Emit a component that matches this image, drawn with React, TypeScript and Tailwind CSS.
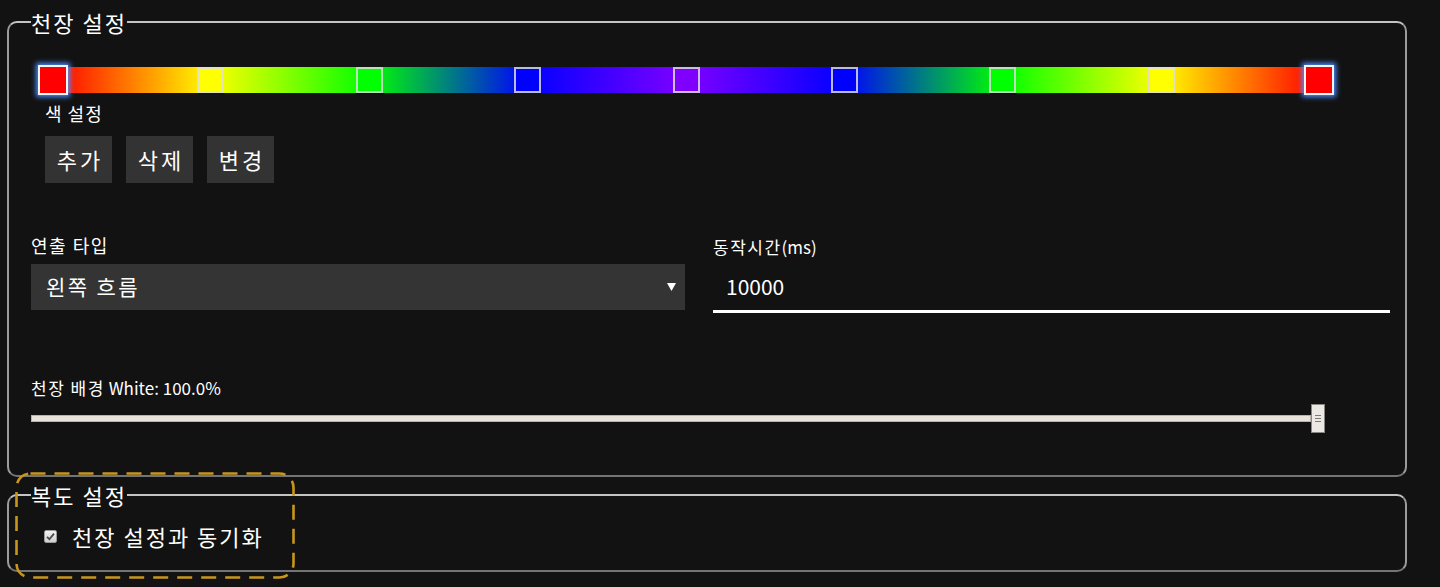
import React from "react";

const stops = [
  { bg: "bg-[#ff0000]", end: true },
  { bg: "bg-[#ffff00]", end: false },
  { bg: "bg-[#00ff00]", end: false },
  { bg: "bg-[#0000ff]", end: false },
  { bg: "bg-[#8000ff]", end: false },
  { bg: "bg-[#0000ff]", end: false },
  { bg: "bg-[#00ff00]", end: false },
  { bg: "bg-[#ffff00]", end: false },
  { bg: "bg-[#ff0000]", end: true },
];

const font = "font-['Noto_Sans_CJK_KR','Noto_Sans',sans-serif]";

function Legend({ children }: { children: React.ReactNode }) {
  return (
    <legend className="text-[22px] leading-[28px] tracking-[2px] text-white">{children}</legend>
  );
}

export default function App() {
  return (
    <div className={`relative h-[587px] overflow-hidden bg-[#121212] pt-[8px] text-white ${font}`}>
      {/* 천장 설정 */}
      <fieldset className="ml-[7px] w-[1400px] rounded-[10px] border-2 border-t-[#c4c4c4] border-x-[#9c9c9c] border-b-[#747474] pl-[22px] pr-[14px] pb-[42px]">
        <Legend>천장 설정</Legend>

        {/* gradient bar */}
        <div className="ml-[9px] mt-[31px] flex h-[26px] w-[1292px] items-center justify-between bg-[linear-gradient(to_right,#ff0000_1%,#ffff00_13.25%,#00ff00_25.5%,#0000ff_37.75%,#8000ff_50%,#0000ff_62.25%,#00ff00_74.5%,#ffff00_86.75%,#ff0000_99%)]">
          {stops.map((s, i) =>
            s.end ? (
              <div
                key={i}
                className={`-mx-[2px] h-[30px] w-[30px] border-2 border-[#eef8ff] shadow-[0_0_5px_2px_#4d8dff] ${s.bg}`}
              />
            ) : (
              <div
                key={i}
                className={`h-[26px] w-[27px] border-2 border-[#dcdcdc]/85 ${s.bg}`}
              />
            )
          )}
        </div>

        <div className="ml-[14px] mt-[8px] text-[18px] leading-[24px] tracking-[1px]">색 설정</div>
        <div className="ml-[14px] mt-[11px] flex gap-[14px]">
          {["추가", "삭제", "변경"].map((t) => (
            <button
              key={t}
              className="flex h-[47px] w-[67px] items-center justify-center bg-[#333333] pl-[3px] text-[22px] tracking-[3px] text-white"
            >
              {t}
            </button>
          ))}
        </div>

        <div className="mt-[50px] grid grid-cols-[654px_677px] gap-[28px]">
          <div>
            <div className="text-[18px] leading-[24px] tracking-[1.5px]">연출 타입</div>
            <div className="mt-[7px] flex h-[46px] items-center justify-between bg-[#343434] pl-[15px] pr-[9px]">
              <span className="text-[21px] tracking-[2.4px]">왼쪽 흐름</span>
              <svg width="9" height="10" viewBox="0 0 9 10">
                <path d="M0 1 L9 1 L4.5 9 Z" fill="#ffffff" />
              </svg>
            </div>
          </div>
          <div>
            <div className="mt-[2px] text-[17px] leading-[24px]">
              <span className="tracking-[1.5px]">동작시간</span>(ms)
            </div>
            <div className="mt-[5px] flex h-[49px] items-center border-b-[3px] border-white pl-[13px] text-[21px]">
              10000
            </div>
          </div>
        </div>

        <div className="mt-[63px] text-[17px] leading-[24px]">
          <span className="tracking-[1.5px]">천장 배경</span> White: 100.0%
        </div>
        <div className="mt-[4px] flex h-[29px] w-[1294px] items-center">
          <div className="h-[7px] flex-1 border border-[#b8b4ac] bg-[#e8e4dc]" />
          <div className="flex h-[29px] w-[14px] flex-col items-center justify-center gap-[2px] border border-[#8a8782] bg-[#ece9e4]">
            <span className="h-[1px] w-[6px] bg-[#7d7a76]" />
            <span className="h-[1px] w-[6px] bg-[#7d7a76]" />
            <span className="h-[1px] w-[6px] bg-[#7d7a76]" />
          </div>
        </div>
      </fieldset>

      {/* 복도 설정 */}
      <fieldset className="ml-[7px] mt-[4px] w-[1400px] rounded-[10px] border-2 border-t-[#c4c4c4] border-x-[#9c9c9c] border-b-[#747474] pl-[22px] pb-[19px]">
        <Legend>복도 설정</Legend>
        <div className="ml-[13px] mt-[12px] flex h-[30px] items-center gap-[15px]">
          <span className="flex h-[13px] w-[13px] items-center justify-center rounded-[2px] border border-[#9a9a9a] bg-[linear-gradient(#f2f2f2,#cfcfcf)]">
            <svg width="9" height="9" viewBox="0 0 9 9">
              <path d="M1 4.8 L3.4 7.2 L8 1.6" fill="none" stroke="#4a4a4a" strokeWidth="1.8" />
            </svg>
          </span>
          <span className="text-[22px] leading-[30px] tracking-[2px]">천장 설정과 동기화</span>
        </div>
      </fieldset>

      {/* highlight overlay */}
      <svg className="pointer-events-none absolute left-[15px] top-[472px]" width="280" height="107" viewBox="0 0 280 107">
        <rect
          x="1.5"
          y="1.5"
          width="277"
          height="104"
          rx="14"
          fill="none"
          stroke="#c9961c"
          strokeWidth="2.6"
          strokeDasharray="15 9"
        />
      </svg>
    </div>
  );
}
